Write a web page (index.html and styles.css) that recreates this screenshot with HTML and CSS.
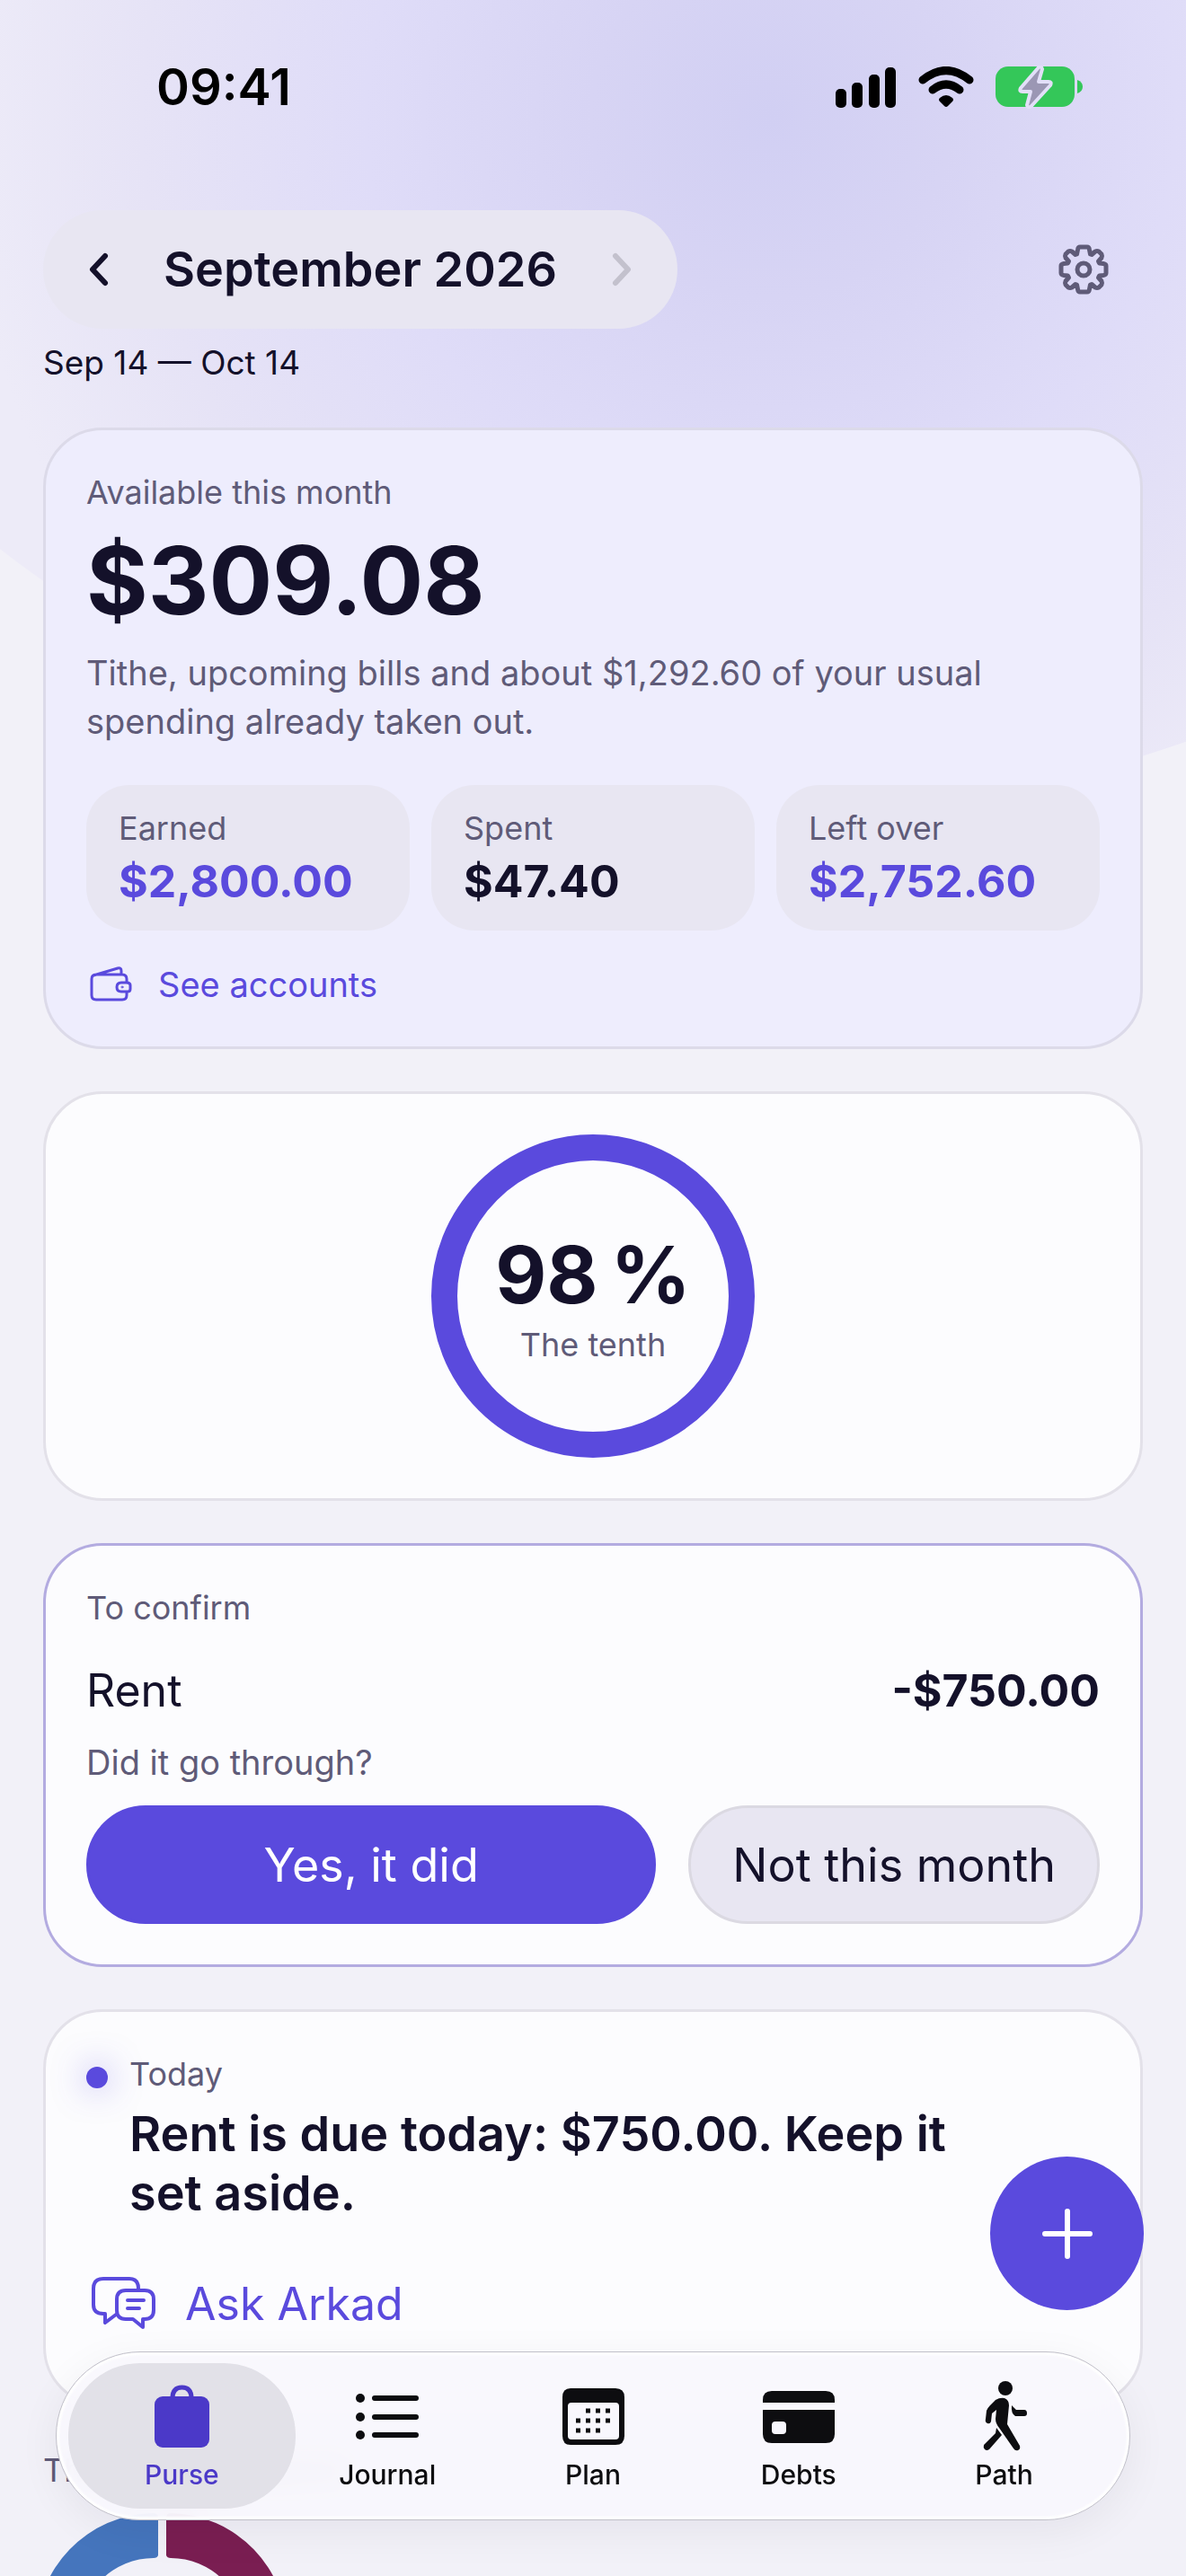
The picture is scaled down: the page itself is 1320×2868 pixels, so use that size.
FILE: index.html
```html
<!DOCTYPE html>
<html lang="en">
  <head>
    <meta charset="UTF-8" />
    <meta name="viewport" content="width=device-width, initial-scale=1.0" />
    <title>Purse</title>
    <link rel="stylesheet" href="styles.css">
  </head>
  <body>
    <div class="glow"></div>

    <div class="screen">
      <div class="status-bar">
        <span class="clock">09:41</span>
        <div class="status-icons">
          <svg width="68" height="46" viewBox="0 0 68 46">
            <rect x="0" y="25" width="12" height="21" rx="5" />
            <rect x="18" y="18" width="12" height="28" rx="5" />
            <rect x="37" y="9" width="12" height="37" rx="5" />
            <rect x="55" y="1" width="12" height="45" rx="5" />
          </svg>
          <svg width="62" height="46" viewBox="0 0 62 46">
            <g fill="none" stroke="#000" stroke-width="9" stroke-linecap="round">
              <path d="M5 15Q31 -6 57 15" />
              <path d="M16 26Q31 14 46 26" />
            </g>
            <path d="M24 35Q31 29 38 35Q40 37 38 39L33 44Q31 46 29 44L24 39Q22 37 24 35Z" />
          </svg>
          <svg width="98" height="48" viewBox="0 0 98 48">
            <rect x="0" y="1" width="88" height="45" rx="14" fill="#34c759" />
            <path d="M91 16Q97 18 97 23.500Q97 29 91 31Z" fill="#34c759" />
            <path
              d="M48 2L28 25Q26 29 30 29H39L35 44Q36 48 40 45L61 22Q63 18 59 18H48L52 4Q51 0 48 2Z"
              fill="#9b97b4"
              stroke="#e2dff8"
              stroke-width="4"
              stroke-linejoin="round"
            />
          </svg>
        </div>
      </div>

      <header class="header">
        <div class="month-picker">
          <button type="button" class="month-arrow" aria-label="Previous month">
            <svg width="24" height="40" viewBox="0 0 24 40">
              <path d="M19 5L5 20L19 35" />
            </svg>
          </button>
          <h1>September 2026</h1>
          <button type="button" class="month-arrow" aria-label="Next month" disabled>
            <svg width="24" height="40" viewBox="0 0 24 40">
              <path d="M5 5L19 20L5 35" />
            </svg>
          </button>
        </div>
        <button type="button" class="settings" aria-label="Settings">
          <svg width="56" height="56" viewBox="-28 -28 56 56">
            <path d="M-4 -25H4Q6 -25 6.500 -22L7.500 -17L9 -16.500L13 -20Q15 -21 17 -20L20 -17Q21 -15 20 -13L16.500 -9L17.500 -7L22 -6.500Q25 -6 25 -4V4Q25 6 22 6.500L17.500 7L16.500 9L20 13Q21 15 20 17L17 20Q15 21 13 20L9 16.500L7.500 17L6.500 22Q6 25 4 25H-4Q-6 25 -6.500 22L-7.500 17L-9 16.500L-13 20Q-15 21 -17 20L-20 17Q-21 15 -20 13L-16.500 9L-17.500 7L-22 6.500Q-25 6 -25 4V-4Q-25 -6 -22 -6.500L-17.500 -7L-16.500 -9L-20 -13Q-21 -15 -20 -17L-17 -20Q-15 -21 -13 -20L-9 -16.500L-7.500 -17L-6.500 -22Q-6 -25 -4 -25Z" />
            <circle r="7" />
          </svg>
        </button>
      </header>
      <p class="range">Sep 14 — Oct 14</p>

      <main class="cards">
        <section class="card available">
          <h2 class="label">Available this month</h2>
          <p class="amount">$309.08</p>
          <p class="note">Tithe, upcoming bills and about $1,292.60 of your usual spending already taken out.</p>
          <div class="stats">
            <div class="stat">
              <span class="label">Earned</span>
              <strong class="accent">$2,800.00</strong>
            </div>
            <div class="stat">
              <span class="label">Spent</span>
              <strong>$47.40</strong>
            </div>
            <div class="stat">
              <span class="label">Left over</span>
              <strong class="accent">$2,752.60</strong>
            </div>
          </div>
          <a href="#accounts" class="accounts">
            <svg width="54" height="48" viewBox="0 0 54 48">
              <path d="M45 21V18Q45 13 40 13H11Q6 13 6 18V36Q6 41 11 41H40Q45 41 45 36V33M8 14L35 6Q39 5 39 9V13" />
              <path d="M45 22H39Q34 22 34 27Q34 32 39 32H46Q49 32 49 29V25Q49 22 45 22Z" />
              <circle cx="40" cy="27" r="1" stroke-width="1" />
            </svg>
            See accounts
          </a>
        </section>

        <section class="card tenth">
          <div class="ring">
            <strong>98&#8239;%</strong>
            <span class="label">The tenth</span>
          </div>
        </section>

        <section class="card confirm">
          <h2 class="label">To confirm</h2>
          <div class="bill">
            <span>Rent</span>
            <strong>-$750.00</strong>
          </div>
          <p class="question">Did it go through?</p>
          <div class="actions">
            <button type="button" class="btn btn-primary">Yes, it did</button>
            <button type="button" class="btn">Not this month</button>
          </div>
        </section>

        <section class="card today">
          <div class="notice">
            <span class="dot"></span>
            <div class="notice-text">
              <h2 class="label">Today</h2>
              <p>Rent is due today: $750.00. Keep it set aside.</p>
            </div>
          </div>
          <a href="#ask" class="ask">
            <svg width="82" height="64" viewBox="0 0 82 64">
              <path d="M33 44L21 53V43H19Q8 43 8 33V15Q8 4 19 4H48Q58 4 58 15V16" />
              <path d="M44 17H65Q75 17 75 27V39Q75 49 65 49H63V58L52 49H44Q34 49 34 39V27Q34 17 44 17ZM46 28H64M46 37H59" />
            </svg>
            Ask Arkad
          </a>
        </section>

        <section class="spend">
          <h2 class="label">This month's spend</h2>
          <svg class="donut" width="264" height="264" viewBox="0 0 264 264">
            <path d="M128 4V47Q127 50 123 50A82 82 0 0 0 123 214L127 217V264A132 132 0 0 1 122 0Q127 0 128 4Z" fill="#4575bd" />
            <path d="M137 4V47Q138 50 142 50A82 82 0 0 1 142 214L137 217V264A132 132 0 0 0 142 0Q138 0 137 4Z" fill="#7a1e52" />
          </svg>
        </section>
      </main>
    </div>

    <button type="button" class="add" aria-label="Add">
      <svg width="56" height="56" viewBox="0 0 56 56">
        <path d="M28 3V53M3 28H53" />
      </svg>
    </button>

    <nav class="tabs">
      <a href="#purse" class="tab active">
        <svg width="88" height="80" viewBox="0 0 88 80">
          <rect x="14" y="19" width="61" height="57" rx="9" />
          <path d="M34 21Q34 9 44.500 9Q55 9 55 21" fill="none" stroke="currentColor" stroke-width="5" />
        </svg>
        Purse
      </a>
      <a href="#journal" class="tab">
        <svg width="88" height="80" viewBox="0 0 88 80">
          <g fill="none" stroke="currentColor" stroke-width="6" stroke-linecap="round">
            <path d="M30 21H76M30 42H76M30 62H76" />
          </g>
          <circle cx="14" cy="21" r="5" />
          <circle cx="14" cy="42" r="5" />
          <circle cx="14" cy="62" r="5" />
        </svg>
        Journal
      </a>
      <a href="#plan" class="tab">
        <svg width="88" height="80" viewBox="0 0 88 80">
          <path
            fill-rule="evenodd"
            d="M19 10H69Q79 10 79 20V63Q79 73 69 73H19Q10 73 10 63V20Q10 10 19 10ZM20 26Q16 26 16 30V63Q16 67 20 67H69Q73 67 73 63V30Q73 26 69 26Z"
          />
          <g fill="none" stroke="currentColor" stroke-width="5">
            <path d="M36 35H65" stroke-dasharray="5 6" />
            <path d="M25 46H65" stroke-dasharray="5 6" />
            <path d="M25 57H53" stroke-dasharray="5 6" />
          </g>
        </svg>
        Plan
      </a>
      <a href="#debts" class="tab">
        <svg width="88" height="80" viewBox="0 0 88 80">
          <path d="M4 26V23Q4 13 14 13H74Q84 13 84 23V26Z" />
          <path fill-rule="evenodd" d="M4 34H84V61Q84 71 74 71H14Q4 71 4 61ZM18 47Q14 47 14 51V57Q14 61 18 61H26Q30 61 30 57V51Q30 47 26 47Z" />
        </svg>
        Debts
      </a>
      <a href="#path" class="tab">
        <svg width="88" height="80" viewBox="0 0 88 80">
          <circle cx="45" cy="10" r="8" />
          <path d="M34 23Q39 20 44 21Q49 23 49 29L47 50L61 74Q62 78 59 79Q56 80 54 77L38 54Q34 49 34 44L35 34L30 38L29 47Q28 50 25 49Q22 48 23 44L24 35Q25 32 28 29Z" />
          <path d="M35 54L41 62L27 78Q24 80 22 78Q20 76 21 73L34 60Z" />
          <path d="M52 29L57 34H66Q69 34 69 38Q69 41 66 41H56Q51 38 52 29Z" />
        </svg>
        Path
      </a>
    </nav>
  </body>
</html>
```
FILE: styles.css
```css
* {
  box-sizing: border-box;
}

body {
  font-family: Inter, "Liberation Sans", sans-serif;
  background-color: #f2f1f8;
  color: #14112a;
  margin: 0;
  height: 100vh;
  overflow: hidden;
  position: relative;
}

h1,
h2,
p {
  margin: 0;
}

a {
  color: #5a4add;
  text-decoration: none;
}

button {
  font-family: inherit;
  border: none;
  padding: 0;
  background: none;
  color: inherit;
  cursor: pointer;
}

svg {
  display: block;
  flex: none;
}

/* Soft disc behind the header */
.glow {
  position: absolute;
  inset: 0;
  clip-path: circle(1404px at 65% -500px);
  background: radial-gradient(
    circle at 65% 130px,
    #d1cff3 0,
    #d7d4f4 200px,
    #dfdcf8 450px,
    #e6e3f6 700px,
    #edebf8 900px
  );
}

.screen {
  position: relative;
  height: 100vh;
  overflow: hidden;
  padding: 0 48px;
}

.status-bar {
  display: flex;
  justify-content: space-between;
  align-items: center;
  height: 194px;
  padding: 0 66px 0 126px;
}

.clock {
  font-size: 56px;
  font-weight: 600;
  color: #000;
}

.status-icons {
  display: flex;
  align-items: center;
  gap: 24px;
}

.header {
  display: flex;
  justify-content: space-between;
  align-items: center;
  margin-top: 40px;
}

.month-picker {
  display: flex;
  align-items: center;
  gap: 60px;
  height: 132px;
  padding: 0 50px;
  border-radius: 66px;
  background-color: #e8e6f2;
}

.month-picker h1 {
  font-size: 54px;
  font-weight: 600;
  line-height: 66px;
}

.month-arrow svg {
  fill: none;
  stroke: #14112a;
  stroke-width: 6;
  stroke-linecap: round;
  stroke-linejoin: round;
}

.month-arrow:disabled svg {
  stroke: #c3c1cd;
}

.settings {
  padding: 38px;
}

.settings svg {
  fill: none;
  stroke: #5f5b78;
  stroke-width: 5;
  stroke-linejoin: round;
}

.range {
  margin-top: 14px;
  font-size: 37px;
  line-height: 48px;
}

.cards {
  display: flex;
  flex-direction: column;
  gap: 47px;
  margin-top: 48px;
}

.card {
  padding: 45px;
  border: 3px solid #e3e1e9;
  border-radius: 66px;
  background-color: #fcfcfe;
}

.label {
  font-size: 36px;
  font-weight: 400;
  line-height: 48px;
  color: #5f5b78;
}

.accent {
  color: #5a4add;
}

.available {
  border-color: #dcdae9;
  background-color: #eeedfd;
}

.amount {
  margin-top: 14px;
  font-size: 105px;
  font-weight: 700;
  line-height: 120px;
}

.note {
  margin-top: 16px;
  font-size: 38px;
  line-height: 54px;
  color: #5f5b78;
}

.stats {
  display: grid;
  grid-template-columns: repeat(3, 1fr);
  gap: 24px;
  margin-top: 44px;
}

.stat {
  display: flex;
  flex-direction: column;
  gap: 4px;
  padding: 24px 36px;
  border-radius: 48px;
  background-color: #e8e6f2;
}

.stat strong {
  font-size: 50px;
  font-weight: 700;
  line-height: 62px;
}

.accounts {
  display: flex;
  align-items: center;
  gap: 26px;
  margin-top: 36px;
  font-size: 38px;
  line-height: 48px;
}

.accounts svg,
.ask svg {
  fill: none;
  stroke: #5a4add;
  stroke-width: 3;
  stroke-linecap: round;
  stroke-linejoin: round;
}

.tenth {
  display: flex;
  justify-content: center;
}

.ring {
  display: flex;
  flex-direction: column;
  align-items: center;
  justify-content: center;
  width: 360px;
  height: 360px;
  border: 29px solid #5a4add;
  border-radius: 50%;
}

.ring strong {
  font-size: 88px;
  line-height: 108px;
}

.confirm {
  border-color: #b3abe0;
}

.bill {
  display: flex;
  justify-content: space-between;
  margin-top: 36px;
  font-size: 50px;
  line-height: 64px;
}

.question {
  margin-top: 24px;
  font-size: 38px;
  line-height: 48px;
  color: #5f5b78;
}

.actions {
  display: flex;
  gap: 36px;
  margin-top: 24px;
}

.btn {
  height: 132px;
  padding: 0 46px;
  border: 3px solid #dbd9e2;
  border-radius: 66px;
  background-color: #e8e6f2;
  font-size: 52px;
}

.btn-primary {
  flex: 1;
  border-color: #5a4add;
  background-color: #5a4add;
  color: #fff;
}

.notice {
  display: flex;
  gap: 24px;
  padding-right: 96px;
}

.dot {
  flex: none;
  width: 24px;
  height: 24px;
  margin-top: 16px;
  border-radius: 50%;
  background-color: #5a4add;
  box-shadow: 0 0 36px rgba(90, 74, 221, 0.5);
}

.notice-text p {
  margin-top: 10px;
  font-size: 54px;
  font-weight: 600;
  line-height: 66px;
}

.ask {
  display: flex;
  align-items: center;
  gap: 28px;
  height: 132px;
  margin-top: 24px;
  font-size: 50px;
}

.ask svg {
  stroke-width: 4;
}

.donut {
  margin-top: 24px;
}

.add {
  position: fixed;
  right: 47px;
  bottom: 296px;
  display: flex;
  align-items: center;
  justify-content: center;
  width: 171px;
  height: 171px;
  border-radius: 50%;
  background-color: #5a4add;
}

.add svg {
  fill: none;
  stroke: #fff;
  stroke-width: 6;
  stroke-linecap: round;
}

/* Floating glass tab bar */
.tabs {
  position: fixed;
  left: 62px;
  right: 62px;
  bottom: 62px;
  display: flex;
  padding: 12px 25px;
  border: 1px solid #c0bfc8;
  border-radius: 94px;
  background-color: rgba(248, 247, 253, 0.92);
  backdrop-filter: blur(16px);
  box-shadow: 0 12px 48px rgba(20, 17, 42, 0.06), inset 0 0 2px 3px #fff;
}

.tab {
  position: relative;
  flex: 1;
  display: flex;
  flex-direction: column;
  align-items: center;
  gap: 8px;
  height: 162px;
  padding-top: 18px;
  color: #0d0d10;
  font-size: 30px;
  font-weight: 500;
  line-height: 36px;
}

.tab svg {
  fill: currentColor;
}

.tab.active {
  color: #4b39c8;
}

.tab.active::before {
  content: "";
  position: absolute;
  inset: 0 -12px;
  z-index: -1;
  border-radius: 80px;
  background-color: #e2e1e8;
}
```
